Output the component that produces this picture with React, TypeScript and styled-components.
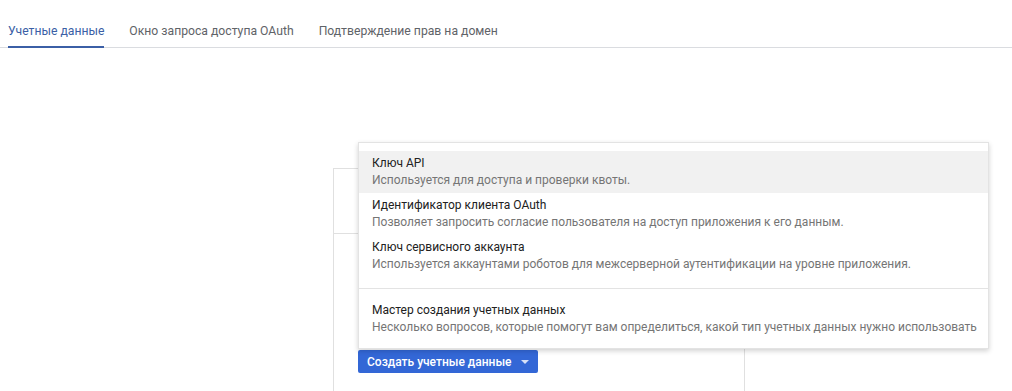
import styled, { createGlobalStyle } from 'styled-components';

const GlobalStyle = createGlobalStyle`
html, body {
  margin: 0;
  padding: 0;
  background: #ffffff;
  font-family: Roboto, "Liberation Sans", Arial, sans-serif;
  overflow: hidden;
}
`;

const Page = styled.div`
width: 1012px;
height: 391px;
overflow: hidden;
`;

const TabBar = styled.div`
display: flex;
gap: 25px;
padding-left: 8px;
border-bottom: 1px solid #dadce0;
`;

const Tab = styled.div<{ $active?: boolean }>`
height: 23px;
padding-top: 23px;
line-height: 16px;
font-size: 12.2px;
color: ${(p) => (p.$active ? '#3b5fa6' : '#5f6368')};
border-bottom: 2px solid ${(p) => (p.$active ? '#3b5fa6' : 'transparent')};
margin-bottom: -1px;
white-space: nowrap;
`;

const Card = styled.div`
margin: 120px 0 0 333px;
width: 410px;
height: 260px;
border: 1px solid #e0e0e0;
border-bottom: none;
`;

const CardHeader = styled.div`
height: 64px;
border-bottom: 1px solid #e0e0e0;
`;

const CardBody = styled.div`
padding: 116px 24px 0;
`;

const Anchor = styled.div`
position: relative;
display: inline-block;
`;

const CreateButton = styled.button`
display: flex;
align-items: center;
gap: 9px;
height: 23px;
padding: 0 9px 0 9px;
border: none;
border-radius: 2px;
background: #3367d6;
color: #ffffff;
font-family: Roboto, "Liberation Sans", Arial, sans-serif;
font-size: 12px;
font-weight: 500;
white-space: nowrap;
cursor: pointer;
`;

const Caret = styled.span`
width: 0;
height: 0;
margin-top: 1px;
border-left: 4px solid transparent;
border-right: 4px solid transparent;
border-top: 4px solid rgba(255, 255, 255, 0.8);
`;

const Menu = styled.div`
position: absolute;
left: 0;
bottom: calc(100% + 1px);
width: 629px;
padding: 8px 0;
background: #ffffff;
border: 1px solid #e3e3e3;
box-shadow: 0 2px 5px rgba(0, 0, 0, 0.18);
`;

const Item = styled.div<{ $hover?: boolean }>`
padding: 4px 13px;
background: ${(p) => (p.$hover ? '#f1f1f1' : 'transparent')};
white-space: nowrap;
`;

const Title = styled.div`
font-size: 12px;
line-height: 17px;
color: #212121;
`;

const Desc = styled.div`
font-size: 12px;
line-height: 17px;
color: #757575;
`;

const Divider = styled.div`
height: 1px;
margin: 11px 0 9px;
background: #e3e3e3;
`;

const items = [
  { title: 'Ключ API', desc: 'Используется для доступа и проверки квоты.', hover: true },
  {
    title: 'Идентификатор клиента OAuth',
    desc: 'Позволяет запросить согласие пользователя на доступ приложения к его данным.',
  },
  {
    title: 'Ключ сервисного аккаунта',
    desc: 'Используется аккаунтами роботов для межсерверной аутентификации на уровне приложения.',
  },
];

const App = () => {
  return (
    <Page>
      <GlobalStyle />
      <TabBar>
        <Tab $active>Учетные данные</Tab>
        <Tab>Окно запроса доступа OAuth</Tab>
        <Tab>Подтверждение прав на домен</Tab>
      </TabBar>
      <Card>
        <CardHeader />
        <CardBody>
          <Anchor>
            <Menu>
              {items.map((it) => (
                <Item key={it.title} $hover={it.hover}>
                  <Title>{it.title}</Title>
                  <Desc>{it.desc}</Desc>
                </Item>
              ))}
              <Divider />
              <Item>
                <Title>Мастер создания учетных данных</Title>
                <Desc>
                  Несколько вопросов, которые помогут вам определиться, какой тип учетных данных нужно использовать
                </Desc>
              </Item>
            </Menu>
            <CreateButton>
              Создать учетные данные
              <Caret />
            </CreateButton>
          </Anchor>
        </CardBody>
      </Card>
    </Page>
  );
};

export default App;
